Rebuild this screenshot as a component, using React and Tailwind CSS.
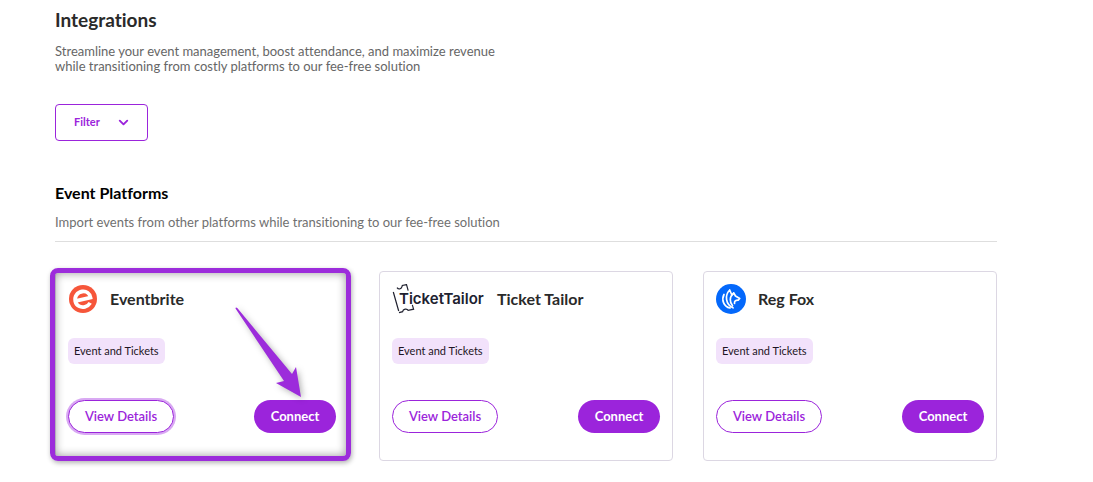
import { ChevronDown } from 'lucide-react'

const EventbriteLogo = () => (
  <svg width="30" height="30" viewBox="0 0 30 30" fill="none" aria-hidden="true">
    <circle cx="15" cy="15" r="14" fill="#f6563a" />
    <path
      d="M8 16.900 22.500 13.500C21.700 9.300 18.300 6.900 14.200 7.500 9.300 8.200 6.300 12.700 7.300 17.300c1.100 4.600 5.500 6.500 9.600 5.500 2.300-.6 4.200-2 5.300-3.900"
      stroke="#fff"
      strokeWidth="3.800"
    />
  </svg>
)

const TicketTailorLogo = () => (
  <svg width="93" height="30" viewBox="0 0 93 30" fill="none" role="img" aria-label="TicketTailor">
    <path
      d="M1.300 8 6.700 27M5 3.600c1.500 2.200 4.200 1.600 4.900-.7l.4-1.400L14.500.6l1.700 6M7 28.600l3.600-.9c.4-2.800 4.400-3.400 5.600-1.300l5.400-1.200-1.300-4.400"
      stroke="#20212f"
      strokeWidth="1.200"
    />
    <text x="7" y="20" className="font-['Inter','Liberation_Sans',sans-serif] text-[15px] font-semibold" fill="#20212f">
      TicketTailor
    </text>
  </svg>
)

const RegFoxLogo = () => (
  <svg width="30" height="30" viewBox="0 0 30 30" fill="none" aria-hidden="true">
    <circle cx="15" cy="15" r="15" fill="#0468fb" />
    <path
      d="M8 10.500C5.300 15.500 7.500 22.500 14 24M13.700 6C8.500 11.500 9.500 20.500 17 23.800M13.700 6l1.900 4.500M17.800 9c-4.600 4-4.300 9-1.300 12.500M17.800 9l1.700 3 4.200 2.500-1.500 1.700c-2.700-.1-3.900 1-3.700 3.300"
      stroke="#fff"
      strokeWidth="1.700"
      strokeLinejoin="round"
      strokeLinecap="round"
    />
  </svg>
)

const integrations = [
  { name: 'Eventbrite',    Logo: EventbriteLogo,   highlighted: true },
  { name: 'Ticket Tailor', Logo: TicketTailorLogo, highlighted: false },
  { name: 'Reg Fox',       Logo: RegFoxLogo,       highlighted: false },
]

const Highlight = () => (
  <div className="pointer-events-none absolute -left-1.5 -right-[3px] -top-1 -bottom-px rounded-lg border-5 border-[#9c2cdb] shadow-[1px_2px_5px_rgba(0,0,0,0.3),inset_0_0_10px_rgba(0,0,0,0.4)]">
    <svg
      className="absolute right-[41px] top-8 overflow-visible drop-shadow-[2px_2px_3px_rgba(0,0,0,0.3)]"
      width="70"
      height="94"
      viewBox="0 0 70 94"
      aria-hidden="true"
    >
      <path d="M.5 3.500Q.5 2 2.300 3L57 69l4-7 5 30-25-14 8-2z" fill="#9c2cdb" />
    </svg>
  </div>
)

const IntegrationCard = ({ name, Logo, highlighted }) => (
  <article className="relative rounded border border-[#dcd7e3] px-3 pt-3 pb-[27px]">
    {/* Header */}
    <div className="flex items-center gap-3">
      <Logo />
      <h3 className="text-base font-bold leading-6 text-[#2a2a2a]">{name}</h3>
    </div>

    <span className="mt-6 block w-fit rounded-md bg-[#f2e2fb] px-1.5 text-[11px] leading-[26px] text-[#1d1524]">
      Event and Tickets
    </span>

    {/* Actions */}
    <div className="mt-9 flex items-center justify-between">
      <button
        type="button"
        className={`h-[33px] w-[106px] rounded-full border border-[#9b24db] bg-white text-[13px] font-semibold text-[#9b24db] ${
          highlighted ? 'ring-2 ring-[#d9a9f3]' : ''
        }`}
      >
        View Details
      </button>
      <button type="button" className="h-[33px] w-[82px] rounded-full bg-[#9b24db] text-[13px] font-bold text-white">
        Connect
      </button>
    </div>

    {highlighted && <Highlight />}
  </article>
)

const App = () => {
  return (
    <main className="bg-white pt-2 pb-5 pl-[55px] pr-24 font-['Lato','Liberation_Sans',sans-serif] [font-variant-ligatures:none]">
      <h1 className="text-[19px] font-bold leading-6 text-[#2a2a2a]">Integrations</h1>
      <p className="mt-3 max-w-[460px] text-[13px] leading-[15px] text-[#666]">
        Streamline your event management, boost attendance, and maximize revenue
        while transitioning from costly platforms to our fee-free solution
      </p>

      <button
        type="button"
        className="mt-[30px] flex h-[37px] w-[93px] items-center justify-between rounded border border-[#9b24db] pl-[18px] pr-4 text-[11px] font-bold text-[#9b24db]"
      >
        Filter
        <ChevronDown size={15} strokeWidth={3} />
      </button>

      <section className="mt-10">
        <h2 className="text-base font-bold leading-6 text-black">Event Platforms</h2>
        <p className="mt-2 border-b border-[#dedede] pb-2.5 text-[13px] leading-[18px] text-[#707070]">
          Import events from other platforms while transitioning to our fee-free solution
        </p>

        <div className="mt-[29px] grid grid-cols-3 gap-[30px]">
          {integrations.map((item) => (
            <IntegrationCard key={item.name} {...item} />
          ))}
        </div>
      </section>
    </main>
  )
}

export default App
